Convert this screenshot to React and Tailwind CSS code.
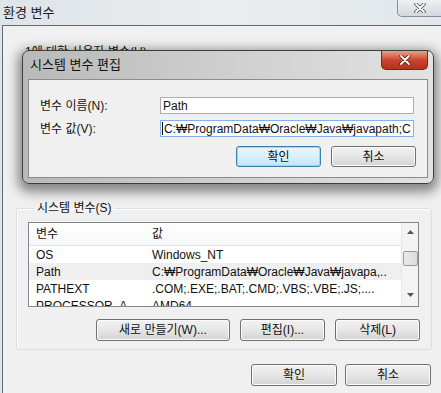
const font = { fontFamily: '"Liberation Sans", "Noto Sans CJK KR", sans-serif' };

const Btn = ({ children, className = "" }) => (
  <div
    className={`flex h-[22px] items-center justify-center rounded-[3px] border border-[#707070] bg-gradient-to-b from-[#f2f2f2] via-[#e6e6e6] to-[#d3d3d3] text-[12px] text-[#111] shadow-[inset_0_0_0_1px_#fbfbfb] ${className}`}
  >
    {children}
  </div>
);

const rows = [
  ["OS", "Windows_NT"],
  ["Path", "C:₩ProgramData₩Oracle₩Java₩javapa,.."],
  ["PATHEXT", ".COM;.EXE;.BAT;.CMD;.VBS;.VBE;.JS;...."],
  ["PROCESSOR_A", "AMD64"],
];

const App = () => {
  return (
    <div
      className="relative h-[393px] w-[441px] overflow-hidden bg-gradient-to-r from-[#dfe4e8] via-[#e9edf0] to-[#e2e7eb] text-[12px] text-[#111]"
      style={font}
    >
      {/* title bar */}
      <div className="flex h-[25px] items-start justify-between">
        <div className="pl-[3px] pt-[5px] text-[13px] leading-[16px] text-[#1a1a1a]">환경 변수</div>
        <div className="flex h-[17px] w-[44px] items-center justify-center rounded-bl-[5px] border border-t-0 border-r-0 border-[#8a9099] bg-gradient-to-b from-[#eef1f4] to-[#d2d8de]">
          <svg width="12" height="10" viewBox="0 0 12 10">
            <path d="M2 1 L10 9 M10 1 L2 9" stroke="#444" strokeWidth="3.4" strokeLinecap="round" />
            <path d="M2 1 L10 9 M10 1 L2 9" stroke="#fff" strokeWidth="1.8" strokeLinecap="round" />
          </svg>
        </div>
      </div>

      {/* client area */}
      <div className="ml-[2px] h-[368px] border-l border-t border-[#5f6a74] bg-[#f0f0f0]">
        <div className="pl-[22px] pt-[19px] leading-[14px]">1에 대한 사용자 변수(U)</div>

        <fieldset className="ml-[13px] mt-[142px] h-[149px] w-[416px] rounded-[3px] border border-[#d5dfe5] px-[11px] shadow-[inset_1px_1px_0_#fff]">
          <legend className="ml-[6px] px-[3px] text-[12px] leading-[14px]">시스템 변수(S)</legend>

          <div className="mt-[7px] flex h-[85px] w-[391px] border border-[#828790] bg-white">
            <div className="flex-1 overflow-hidden">
              <div className="flex h-[23px] items-center border-b border-[#e5e5e5] bg-gradient-to-b from-white to-[#f6f7f8]">
                <div className="w-[117px] pl-[7px]">변수</div>
                <div className="pl-[6px]">값</div>
              </div>
              {rows.map(([name, value], i) => (
                <div
                  key={name}
                  className={`flex h-[17px] items-center whitespace-nowrap ${i === 1 ? "bg-[#efefef]" : ""}`}
                >
                  <div className="w-[117px] pl-[7px]">{name}</div>
                  <div className="pl-[6px]">{value}</div>
                </div>
              ))}
            </div>
            <div className="flex w-[17px] flex-col items-center border-l border-[#e8e8e8] bg-[#f3f3f3]">
              <svg className="mt-[7px]" width="7" height="4" viewBox="0 0 7 4">
                <path d="M0 4 L3.5 0 L7 4 Z" fill="#555" />
              </svg>
              <div className="mt-[17px] h-[15px] w-[15px] rounded-[2px] border border-[#9a9a9a] bg-gradient-to-r from-[#eaeaea] to-[#dcdcdc]" />
              <svg className="mt-[27px]" width="7" height="4" viewBox="0 0 7 4">
                <path d="M0 0 L7 0 L3.5 4 Z" fill="#555" />
              </svg>
            </div>
          </div>

          <div className="mt-[12px] flex justify-end gap-[10px]">
            <Btn className="w-[134px]">새로 만들기(W)...</Btn>
            <Btn className="w-[85px]">편집(I)...</Btn>
            <Btn className="w-[85px]">삭제(L)</Btn>
          </div>
        </fieldset>

        <div className="mr-[10px] mt-[14px] flex justify-end gap-[8px]">
          <Btn className="w-[86px]">확인</Btn>
          <Btn className="w-[86px]">취소</Btn>
        </div>
      </div>

      {/* edit dialog overlay */}
      <div className="absolute left-[22px] top-[50px] flex h-[134px] w-[412px] flex-col rounded-[7px] border border-[#3d3d3d] bg-gradient-to-r from-[#b9b9b9] via-[#cfcfcf] to-[#e2e2e2] shadow-[0_4px_12px_4px_rgba(0,0,0,0.45)]">
        <div className="flex h-[28px] items-start justify-between pl-[7px]">
          <div className="pt-[6px] text-[13px] leading-[16px] text-[#111]">시스템 변수 편집</div>
          <div className="mr-[5px] flex h-[19px] w-[47px] items-center justify-center rounded-b-[5px] border border-t-0 border-[#6b2a20] bg-gradient-to-b from-[#e8a08c] via-[#c9452e] to-[#b8301c]">
            <svg width="12" height="10" viewBox="0 0 12 10">
              <path d="M2 1 L10 9 M10 1 L2 9" stroke="#5a1a10" strokeWidth="3.4" strokeLinecap="round" />
              <path d="M2 1 L10 9 M10 1 L2 9" stroke="#fff" strokeWidth="1.8" strokeLinecap="round" />
            </svg>
          </div>
        </div>
        <div className="mx-[5px] h-[99px] border border-[#8c8c8c] bg-[#f0f0f0] px-[11px] pt-[17px]">
          <div className="flex h-[17px] items-center">
            <div className="w-[120px]">변수 이름(N):</div>
            <div className="flex h-[17px] w-[254px] items-center border border-[#abadb3] bg-white pl-[2px]">Path</div>
          </div>
          <div className="mt-[6px] flex h-[17px] items-center">
            <div className="w-[120px]">변수 값(V):</div>
            <div className="flex h-[17px] w-[254px] items-center overflow-hidden whitespace-nowrap border border-[#7eb4ea] bg-white pl-[2px]">
              <span className="-ml-[1px] mr-[1px] h-[13px] w-[1px] bg-black" />
              C:₩ProgramData₩Oracle₩Java₩javapath;C
            </div>
          </div>
          <div className="mt-[9px] flex justify-end gap-[10px]">
            <div className="flex h-[21px] w-[85px] items-center justify-center rounded-[3px] border border-[#3c7fb1] bg-gradient-to-b from-[#eaf6fd] via-[#d9f0fc] to-[#bee6fd] shadow-[inset_0_0_0_1px_#9fd6f5]">
              확인
            </div>
            <Btn className="!h-[21px] w-[85px]">취소</Btn>
          </div>
        </div>
      </div>
    </div>
  );
};

export default App;
